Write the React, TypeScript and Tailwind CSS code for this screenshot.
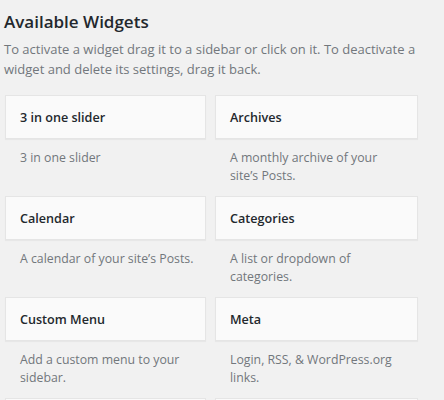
import React from 'react';

const widgets = [
  { name: '3 in one slider', desc: '3 in one slider' },
  { name: 'Archives', desc: 'A monthly archive of your site’s Posts.' },
  { name: 'Calendar', desc: 'A calendar of your site’s Posts.' },
  { name: 'Categories', desc: 'A list or dropdown of categories.' },
  { name: 'Custom Menu', desc: 'Add a custom menu to your sidebar.' },
  { name: 'Meta', desc: 'Login, RSS, & WordPress.org links.' },
  { name: 'Pages', desc: 'A list of your site’s Pages.' },
  { name: 'Recent Comments', desc: 'Your site’s most recent comments.' },
];

const App: React.FC = () => {
  return (
    <div className="h-[400px] bg-[#f1f1f1] font-['Open_Sans',sans-serif] text-[13px] overflow-hidden">
      <div className="pl-[4px] pr-[8px] pt-[10px]">
        <h3 className="text-[17px] font-semibold text-[#23282d] leading-[24px]">Available Widgets</h3>
        <p className="mt-[6px] text-[#72777c] leading-[19.5px]">
          To activate a widget drag it to a sidebar or click on it. To deactivate a widget and delete its settings, drag it back.
        </p>
      </div>
      <div className="grid grid-cols-[201px_203px] gap-x-[9px] pl-[5px] mt-[16px]">
        {widgets.map((w, i) => (
          <div key={w.name} className="h-[101px]">
            <div className="h-[44px] bg-[#fafafa] border border-[#e5e5e5] shadow-[0_1px_1px_rgba(0,0,0,0.04)] flex items-center px-[14px] pt-[2px]">
              <span className="font-semibold text-[#23282d] text-[12.6px]">{w.name}</span>
            </div>
            <p
              className={
                i % 2 === 0
                  ? 'pt-[10px] pl-[15px] pr-[8px] text-[#72777c] text-[12.3px] leading-[18.4px]'
                  : 'pt-[10px] pl-[15px] pr-[15px] text-[#72777c] text-[12.3px] leading-[18.4px]'
              }
            >
              {w.desc}
            </p>
          </div>
        ))}
      </div>
    </div>
  );
};

export default App;
